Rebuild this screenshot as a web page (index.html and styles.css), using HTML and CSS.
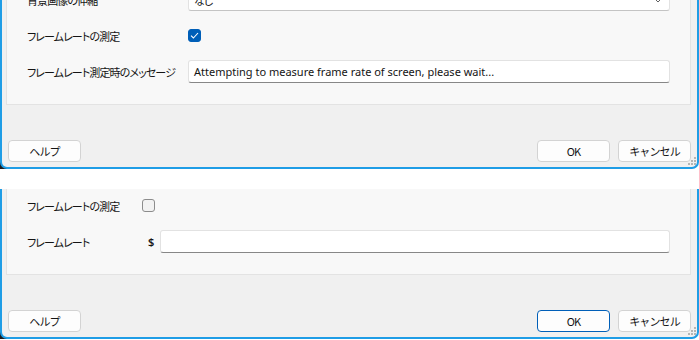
FILE: index.html
```html
<!DOCTYPE html>
<html lang="ja">
<head>
  <meta charset="utf-8" />
  <title>フレームレート設定</title>
  <link rel="stylesheet" href="styles.css">
</head>

<body>
  <!-- 測定あり -->
  <div class="shot">
    <div class="dialog">
      <div class="card card-a">
        <span class="label">背景画像の伸縮</span>
        <div class="select">
          <span>なし</span>
          <svg class="chevron" width="10" height="6" viewBox="0 0 10 6"><path d="M1 1 L5 5 L9 1" fill="none" stroke="#606060" stroke-width="1"/></svg>
        </div>

        <span class="label">フレームレートの測定</span>
        <span class="check checked">
          <svg width="9" height="7" viewBox="0 0 9 7"><path d="M1 3.6 L3.4 6 L8 1" fill="none" stroke="#ffffff" stroke-width="1.1"/></svg>
        </span>

        <span class="label">フレームレート測定時のメッセージ</span>
        <div class="field">Attempting to measure frame rate of screen, please wait...</div>
      </div>

      <div class="footer">
        <button class="btn">ヘルプ</button>
        <span class="spacer"></span>
        <button class="btn">OK</button>
        <button class="btn">キャンセル</button>
      </div>
      <svg class="grip" width="8" height="8" viewBox="0 0 8 8">
        <rect x="6" y="0" width="2" height="2" />
        <rect x="3" y="3" width="2" height="2" />
        <rect x="6" y="3" width="2" height="2" />
        <rect x="0" y="6" width="2" height="2" />
        <rect x="3" y="6" width="2" height="2" />
        <rect x="6" y="6" width="2" height="2" />
      </svg>
    </div>
  </div>

  <!-- 測定なし -->
  <div class="shot second">
    <div class="dialog">
      <div class="card card-b">
        <span class="label">フレームレートの測定</span>
        <span class="check"></span>

        <span class="label">フレームレート</span>
        <div class="with-unit">
          <span class="unit">$</span>
          <div class="field"></div>
        </div>
      </div>

      <div class="footer">
        <button class="btn">ヘルプ</button>
        <span class="spacer"></span>
        <button class="btn default">OK</button>
        <button class="btn">キャンセル</button>
      </div>
      <svg class="grip" width="8" height="8" viewBox="0 0 8 8">
        <rect x="6" y="0" width="2" height="2" />
        <rect x="3" y="3" width="2" height="2" />
        <rect x="6" y="3" width="2" height="2" />
        <rect x="0" y="6" width="2" height="2" />
        <rect x="3" y="6" width="2" height="2" />
        <rect x="6" y="6" width="2" height="2" />
      </svg>
    </div>
  </div>
</body>
</html>
```

FILE: styles.css
```css
body {
  margin: 0;
  background: #ffffff;
  font-family: "Noto Sans CJK JP", "Noto Sans", sans-serif;
  font-size: 11px;
  letter-spacing: -0.9px;
  color: #141414;
  font-feature-settings: "palt";
}

.shot {
  width: 699px;
  /* 角の外側に見える暗い部分 */
  background: linear-gradient(to right, #1c1c1c 8px, #ffffff 8px);
}

.shot.second {
  margin-top: 20px;
}

.dialog {
  position: relative;
  background: #f0f0f0;
  border: 2px solid #1f9de6;
  border-top: none;
  border-bottom-left-radius: 7px;
  border-bottom-right-radius: 7px;
  overflow: hidden;
}

.card {
  display: grid;
  grid-auto-rows: 23px;
  row-gap: 13px;
  align-items: center;
  margin: 0 6px 0 4px;
  padding: 12px 20px 21px 20px;
  background: #f8f8f8;
  border: 1px solid #e3e3e3;
}

.card-a {
  grid-template-columns: 161px 1fr;
  margin-top: -25px;
}

.card-b {
  grid-template-columns: 115px 1fr;
  margin-top: -8px;
}

.label {
  white-space: nowrap;
}

.select,
.field {
  height: 23px;
  box-sizing: border-box;
  background: #ffffff;
  border: 1px solid #e2e2e2;
  border-radius: 3px;
  display: flex;
  align-items: center;
  padding: 0 5px;
}

.select {
  justify-content: space-between;
  border-bottom-color: #c4c4c4;
  padding-right: 6px;
}

.field {
  border-bottom-color: #878787;
  font-family: "Noto Sans", "Noto Sans CJK JP", sans-serif;
  font-feature-settings: normal;
  font-size: 11px;
  letter-spacing: 0;
}

.check {
  width: 13px;
  height: 13px;
  box-sizing: border-box;
  border: 1px solid #8c8c8c;
  border-radius: 3px;
  background: #f2f2f2;
  display: flex;
  justify-content: center;
  align-items: center;
}

.check.checked {
  background: #005fb8;
  border-color: #005fb8;
}

.with-unit {
  display: flex;
  align-items: center;
  gap: 6px;
}

.with-unit .field {
  flex: 1;
}

.unit {
  margin-left: 6px;
  font-family: "Noto Sans", sans-serif;
  font-size: 11px;
  font-weight: 600;
  letter-spacing: 0;
}

.footer {
  display: flex;
  gap: 8px;
  padding: 35px 6px 5px 6px;
}

.spacer {
  flex: 1;
}

.btn {
  width: 73px;
  height: 22px;
  padding: 0;
  font-family: inherit;
  font-size: 11px;
  letter-spacing: -0.9px;
  color: #141414;
  background: #fdfdfd;
  border: 1px solid #d3d3d3;
  border-radius: 4px;
}

.btn.default {
  border-color: #005fb8;
}

.grip {
  position: absolute;
  right: 1px;
  bottom: 2px;
  fill: #b5b5b5;
}
```
